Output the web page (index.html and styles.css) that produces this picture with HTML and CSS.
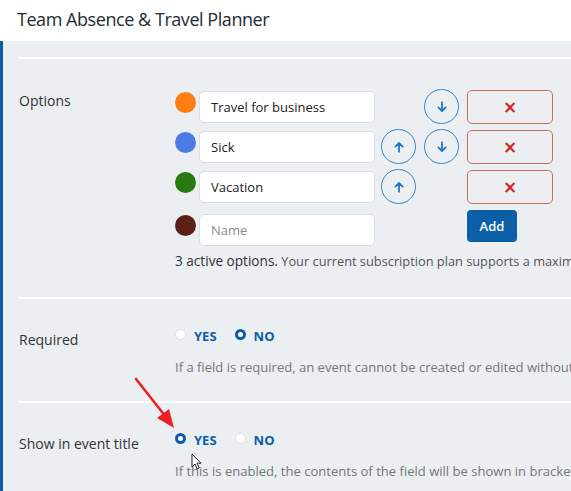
FILE: index.html
```html
<!DOCTYPE html>
<html>
<head>
<meta charset="utf-8">
<link rel="stylesheet" href="styles.css">
</head>
<body>
<header class="topbar">
  <h1 class="title">Team Absence &amp; Travel Planner</h1>
</header>
<main class="panel">
  <div class="spacer"></div>
  <section class="section options-section">
    <div class="label">Options</div>
    <div class="content">
      <div class="opt-row">
        <span class="dot" style="background:#fd7f12"></span>
        <input class="field" type="text" value="Travel for business">
        <span class="slot"></span>
        <button class="circle" aria-label="down"><svg viewBox="0 0 16 16" width="14" height="14"><path d="M8 2.5v10M3.8 8.5L8 12.7l4.2-4.2" fill="none" stroke="#1877c5" stroke-width="2" stroke-linecap="round" stroke-linejoin="round"/></svg></button>
        <button class="del">×</button>
      </div>
      <div class="opt-row">
        <span class="dot" style="background:#4a7ce4"></span>
        <input class="field" type="text" value="Sick">
        <button class="circle" aria-label="up"><svg viewBox="0 0 16 16" width="14" height="14"><path d="M8 13.5v-10M3.8 7.5L8 3.3l4.2 4.2" fill="none" stroke="#1877c5" stroke-width="2" stroke-linecap="round" stroke-linejoin="round"/></svg></button>
        <button class="circle" aria-label="down"><svg viewBox="0 0 16 16" width="14" height="14"><path d="M8 2.5v10M3.8 8.5L8 12.7l4.2-4.2" fill="none" stroke="#1877c5" stroke-width="2" stroke-linecap="round" stroke-linejoin="round"/></svg></button>
        <button class="del">×</button>
      </div>
      <div class="opt-row">
        <span class="dot" style="background:#287a0e"></span>
        <input class="field" type="text" value="Vacation">
        <button class="circle" aria-label="up"><svg viewBox="0 0 16 16" width="14" height="14"><path d="M8 13.5v-10M3.8 7.5L8 3.3l4.2 4.2" fill="none" stroke="#1877c5" stroke-width="2" stroke-linecap="round" stroke-linejoin="round"/></svg></button>
        <span class="slot"></span>
        <button class="del">×</button>
      </div>
      <div class="opt-row new-row">
        <span class="dot" style="background:#5b1f16"></span>
        <input class="field" type="text" placeholder="Name">
        <span class="slot"></span>
        <span class="slot"></span>
        <button class="add">Add</button>
      </div>
      <p class="note"><span class="strong">3 active options.</span> Your current subscription plan supports a maximum of 10 options.</p>
    </div>
  </section>
  <section class="section">
    <div class="label label-radio">Required</div>
    <div class="content radio-content">
      <div class="radios">
        <label class="radio"><span class="ring"></span>YES</label>
        <label class="radio"><span class="ring on"></span>NO</label>
      </div>
      <p class="help">If a field is required, an event cannot be created or edited without filling it in.</p>
    </div>
  </section>
  <section class="section">
    <div class="label label-radio">Show in event title</div>
    <div class="content radio-content">
      <div class="radios">
        <label class="radio"><span class="ring on"></span>YES</label>
        <label class="radio"><span class="ring"></span>NO</label>
      </div>
      <p class="help">If this is enabled, the contents of the field will be shown in brackets after the event title.</p>
    </div>
  </section>
  <svg class="annot-arrow" width="60" height="70" viewBox="0 0 60 70">
    <line x1="3" y1="3" x2="33" y2="41" stroke="#ec2127" stroke-width="2.6" stroke-linecap="round"/>
    <polygon points="41,52 24,42 36,33" fill="#ec2127"/>
  </svg>
  <svg class="cursor" width="12" height="18" viewBox="0 0 12 18">
    <path d="M1 1v13l3-3 2.2 5 2-1-2.2-4.8H10z" fill="#fff" stroke="#222" stroke-width="1" stroke-linejoin="round"/>
  </svg>
</main>
</body>
</html>
```
FILE: styles.css
```css
* { box-sizing: border-box; }
html, body { margin: 0; padding: 0; }
body {
  width: 571px;
  height: 491px;
  overflow: hidden;
  font-family: "Open Sans", "Liberation Sans", sans-serif;
  background: #ebeff1;
  color: #333;
}
.topbar {
  height: 41px;
  background: #fff;
  display: flex;
  align-items: center;
  padding-left: 17px;
}
.title {
  margin: 0;
  font-size: 18px;
  font-weight: 500;
  letter-spacing: -0.45px;
  color: #1e2b36;
  padding-bottom: 4px;
}
.panel {
  position: relative;
  border-left: 3px solid #0b5ea8;
  min-height: 450px;
  padding-left: 15px;
}
.spacer { height: 16px; }
.section {
  display: flex;
  border-top: 2px solid #fff;
  white-space: nowrap;
}
.label {
  width: 157px;
  flex: none;
  padding-left: 1px;
  font-size: 14px;
  line-height: 20px;
  color: #333;
}
.options-section { padding: 32px 0 26px; }
.content { flex: none; }
.opt-row {
  display: flex;
  align-items: flex-start;
  height: 32px;
  margin-bottom: 8px;
}
.new-row { margin-top: 11px; margin-bottom: 5px; }
.dot {
  width: 21px;
  height: 21px;
  border-radius: 50%;
  margin-top: 1px;
  margin-right: 3px;
  flex: none;
}
.field {
  width: 176px;
  height: 32px;
  border: 1px solid #dadfe3;
  border-radius: 5px;
  background: #fff;
  font-family: inherit;
  font-size: 13px;
  color: #222;
  padding: 0 11px;
  margin-right: 6px;
  outline: none;
}
.field::placeholder { color: #8c8c8c; }
.circle, .slot {
  width: 35px;
  height: 35px;
  margin-top: -2px;
  margin-right: 8px;
  flex: none;
}
.circle {
  border: 1px solid #3d84c0;
  border-radius: 50%;
  background: transparent;
  padding: 0;
  display: flex;
  align-items: center;
  justify-content: center;
}
.del {
  width: 86px;
  height: 34px;
  margin-top: -1px;
  border: 1px solid #c8705f;
  border-radius: 5px;
  background: transparent;
  color: #d42020;
  font-size: 17px;
  font-weight: 700;
  line-height: 1;
  padding: 0;
  font-family: "DejaVu Sans", sans-serif;
}
.add {
  width: 50px;
  height: 32px;
  margin-top: -4px;
  border: 0;
  border-radius: 4px;
  background: #0b5fa6;
  color: #fff;
  font-family: inherit;
  font-size: 13px;
  font-weight: 600;
}
.note {
  margin: 0;
  font-size: 12.8px;
  line-height: 20px;
  color: #555;
}
.strong { font-size: 13.6px; color: #333; }
.label-radio { padding-top: 31px; }
.radio-content { padding: 27px 0 24px; }
.radios {
  display: flex;
  height: 20px;
  align-items: center;
  gap: 18px;
}
.radio {
  display: flex;
  align-items: center;
  font-size: 13px;
  font-weight: 700;
  color: #0b5ea8;
}
.ring {
  width: 11px;
  height: 11px;
  border-radius: 50%;
  background: #fff;
  border: 1px solid #dde1e4;
  margin-right: 8px;
  margin-top: -3px;
}
.ring.on { border: 3.5px solid #0b5ea8; background: #fff; }
.help {
  margin: 11px 0 0;
  font-size: 13.05px;
  line-height: 20px;
  color: #777;
}
.annot-arrow {
  position: absolute;
  left: 130px;
  top: 335px;
}
.cursor {
  position: absolute;
  left: 188px;
  top: 412px;
}
```
